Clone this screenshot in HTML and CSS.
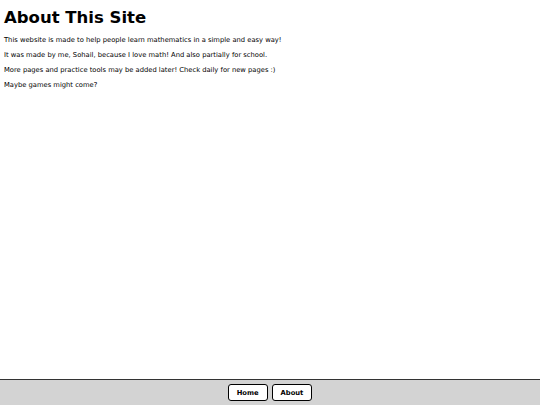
FILE: index.html
```html
<!DOCTYPE html>
<html>
<head>
<meta charset="utf-8">
<link rel="stylesheet" href="styles.css">
</head>
<body>
<main class="content">
<h1 class="title">About This Site</h1>
<p class="text">This website is made to help people learn mathematics in a simple and easy way!</p>
<p class="text">It was made by me, Sohail, because I love math! And also partially for school.</p>
<p class="text">More pages and practice tools may be added later! Check daily for new pages :)</p>
<p class="text">Maybe games might come?</p>
</main>
<footer class="footer">
<button class="btn">Home</button>
<button class="btn">About</button>
</footer>
</body>
</html>
```
FILE: styles.css
```css
html, body { margin: 0; padding: 0; }
body {
  display: flex;
  flex-direction: column;
  min-height: 100vh;
  font-family: "DejaVu Sans", Verdana, sans-serif;
  color: #000;
  background: #fff;
}
.content { flex: 1; padding: 0 4px; }
.title {
  font-size: 16.5px;
  font-weight: bold;
  margin: 10px 0 10px;
  line-height: 16px;
}
.text {
  font-size: 6.75px;
  margin: 0 0 6px;
  line-height: 9px;
}
.footer {
  background: #d3d3d3;
  border-top: 1px solid #333;
  height: 25px;
  display: flex;
  justify-content: center;
  align-items: center;
  gap: 4px;
}
.btn {
  font-family: "DejaVu Sans", Verdana, sans-serif;
  font-size: 6.75px;
  font-weight: bold;
  background: #fff;
  color: #000;
  border: 1.5px solid #000;
  border-radius: 3px;
  height: 17px;
  padding: 0 8px;
  margin: 0;
}
```
